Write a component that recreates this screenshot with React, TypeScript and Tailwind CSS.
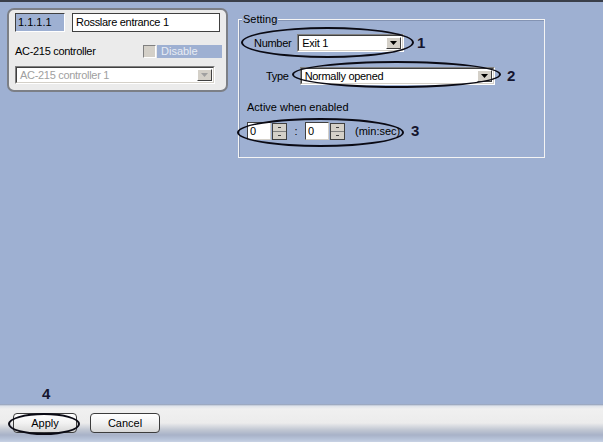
import React from 'react';

const font = { fontFamily: '"Liberation Sans", Arial, sans-serif' };

const Arrow = ({ disabled }: { disabled?: boolean }) => (
  <div className="flex h-full w-[15px] items-center justify-center border border-t-white border-l-white border-r-[#404040] border-b-[#404040] bg-[#d4d0c8]">
    <svg width="7" height="4" viewBox="0 0 7 4">
      <path d="M0 0h7L3.5 4z" fill={disabled ? '#a0a0a0' : '#000'} />
    </svg>
  </div>
);

const Combo = ({ value, width, disabled }: { value: string; width: string; disabled?: boolean }) => (
  <div className={`flex h-[18px] ${width} items-stretch border border-t-[#808080] border-l-[#808080] border-r-white border-b-white`}>
    <div className="flex flex-1 items-stretch border border-t-[#404040] border-l-[#404040] border-r-[#d4d0c8] border-b-[#d4d0c8] bg-white p-[1px]">
      <span
        className={`flex-1 pl-[2px] text-[11px] leading-[12px] tracking-[-0.3px] ${disabled ? 'text-[#a0a0a0]' : 'text-black'}`}
      >
        {value}
      </span>
      <Arrow disabled={disabled} />
    </div>
  </div>
);

const Spin = () => (
  <div className="flex h-[18px] items-center gap-[1px]">
    <div className="h-[18px] w-[24px] border border-t-[#404040] border-l-[#404040] border-r-[#d4d0c8] border-b-[#d4d0c8] bg-white pl-[2px] text-[11px] leading-[16px]">
      0
    </div>
    <div className="flex h-[17px] w-[15px] flex-col border border-[#404040] bg-[#d4d0c8]">
      <div className="flex flex-1 items-center justify-center border-b border-[#808080]">
        <div className="h-[1px] w-[3px] bg-[#404040]" />
      </div>
      <div className="flex flex-1 items-center justify-center">
        <div className="h-[1px] w-[3px] bg-[#404040]" />
      </div>
    </div>
  </div>
);

const Oval = ({ className }: { className: string }) => (
  <div className={`pointer-events-none absolute rounded-[50%] border-[2px] border-[#0a0a14] ${className}`} />
);

const Num = ({ n, className }: { n: string; className: string }) => (
  <span className={`absolute text-[15px] font-bold leading-none text-[#15152e] ${className}`}>{n}</span>
);

export default function App() {
  return (
    <div
      className="flex h-[442px] w-[603px] flex-col overflow-hidden border-t-2 border-[#3a3f4a] bg-[#9eb0d2] text-[11px] text-black"
      style={font}
    >
      <div className="flex items-start">
        {/* object panel */}
        <div className="ml-[7px] mt-[6px] h-[84px] w-[221px] rounded-[7px] border-2 border-[#7c7f86] bg-[#ebebeb] px-[6px] pt-[3px]">
          <div className="flex gap-[7px]">
            <div className="h-[19px] w-[50px] border border-t-[#404040] border-l-[#404040] border-r-white border-b-white bg-[#9eb0d2] pl-[2px] leading-[17px]">
              1.1.1.1
            </div>
            <div className="h-[19px] flex-1 border border-[#404040] bg-white pl-[3px] leading-[17px] tracking-[-0.3px]">
              Rosslare entrance 1
            </div>
          </div>
          <div className="mt-[13px] flex h-[13px] items-center">
            <span className="tracking-[-0.3px]">AC-215 controller</span>
            <div className="-mr-[2px] ml-auto flex h-[13px] items-center">
              <div className="h-[13px] w-[13px] border border-t-[#808080] border-l-[#808080] border-r-white border-b-white bg-[#d4d0c8]" />
              <div className="ml-[1px] h-[13px] w-[65px] bg-[#9eb0d2] pl-[4px] leading-[13px] text-[#e8ecf4]">Disable</div>
            </div>
          </div>
          <div className="mt-[8px]">
            <Combo value="AC-215 controller 1" width="w-[200px]" disabled />
          </div>
        </div>

        {/* settings group */}
        <div className="relative ml-[10px] mt-[17px] h-[139px] w-[307px] border border-[#f4f4f4] shadow-[inset_1px_1px_0_#8393b3]">
          <span className="absolute left-[3px] top-[-7px] bg-[#9eb0d2] px-[1px] leading-[12px]">Setting</span>
          <div className="ml-[15px] mt-[14px] flex items-center gap-[6px]">
            <span className="tracking-[-0.3px]">Number</span>
            <Combo value="Exit 1" width="w-[107px]" />
          </div>
          <div className="ml-[27px] mt-[15px] flex items-center gap-[11px]">
            <span className="tracking-[-0.3px]">Type</span>
            <Combo value="Normally opened" width="w-[195px]" />
          </div>
          <div className="ml-[8px] mt-[16px] leading-[13px]">Active when enabled</div>
          <div className="ml-[8px] mt-[8px] flex items-center">
            <Spin />
            <span className="w-[18px] text-center">:</span>
            <Spin />
            <span className="ml-[10px]">(min:sec)</span>
          </div>
          <Oval className="left-[2px] top-[7px] h-[31px] w-[173px]" />
          <Num n="1" className="left-[178px] top-[15px]" />
          <Oval className="left-[53px] top-[41px] h-[27px] w-[209px]" />
          <Num n="2" className="left-[268px] top-[48px]" />
          <Oval className="left-[-2px] top-[98px] h-[29px] w-[167px]" />
          <Num n="3" className="left-[172px] top-[103px]" />
        </div>
      </div>

      <div className="mt-auto flex pl-[42px]">
        <span className="mb-[3px] text-[15px] font-bold leading-none text-[#15152e]">4</span>
      </div>
      <div className="relative flex h-[38px] items-start gap-[13px] bg-[linear-gradient(to_bottom,#8796b4_0px,#dfe3ea_2px,#f0f0f0_5px,#ececec_19px,#c0c6d2_26px,#a8b2c8_31px,#b6c2d8_35px,#c8d2e4_38px)] pl-[13px] pt-[9px]">
        <button className="h-[20px] w-[64px] rounded-[4px] border border-[#3c3c3c] bg-[linear-gradient(to_bottom,#ffffff,#f2f2f2_50%,#d8d8d8)] text-[11px] text-black">
          Apply
        </button>
        <button className="h-[20px] w-[70px] rounded-[4px] border border-[#3c3c3c] bg-[linear-gradient(to_bottom,#ffffff,#f2f2f2_50%,#d8d8d8)] text-[11px] text-black">
          Cancel
        </button>
        <Oval className="left-[8px] top-[9px] h-[22px] w-[72px]" />
      </div>
    </div>
  );
}
